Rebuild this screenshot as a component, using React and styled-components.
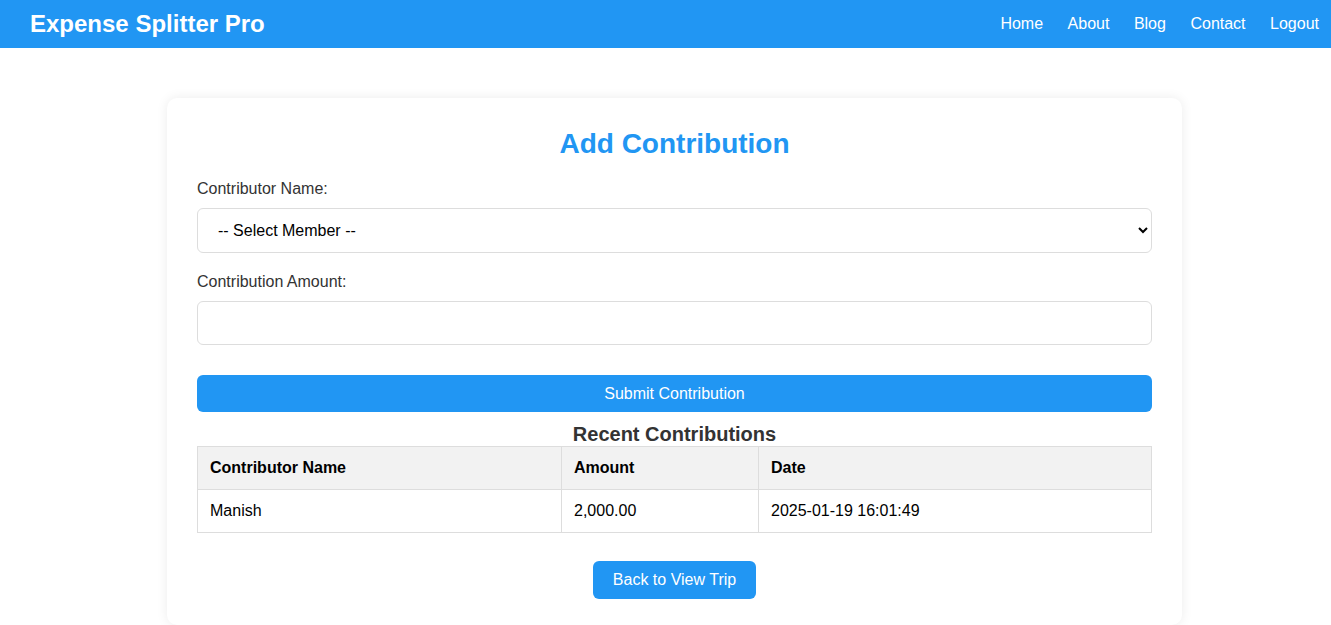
import React from "react";
import styled, { createGlobalStyle } from "styled-components";

const GlobalStyle = createGlobalStyle`
  * { box-sizing: border-box; }
  body {
    margin: 0;
    font-family: "Liberation Sans", Arial, sans-serif;
    background: #ffffff;
    color: #333;
  }
`;

const contributions = [
  { name: "Manish", amount: "2,000.00", date: "2025-01-19 16:01:49" },
];

const App = () => {
  return (
    <>
      <GlobalStyle />
      <NavBar>
        <Brand>Expense Splitter Pro</Brand>
        <NavLinks>
          <NavLink href="#">Home</NavLink>
          <NavLink href="#">About</NavLink>
          <NavLink href="#">Blog</NavLink>
          <NavLink href="#">Contact</NavLink>
          <NavLink href="#">Logout</NavLink>
        </NavLinks>
      </NavBar>

      <Page>
        <Card>
          <Title>Add Contribution</Title>
          <Label>Contributor Name:</Label>
          <Select defaultValue="">
            <option value="">-- Select Member --</option>
            <option value="manish">Manish</option>
          </Select>
          <Label>Contribution Amount:</Label>
          <Input type="number" />
          <SubmitButton>Submit Contribution</SubmitButton>

          <SubHeading>Recent Contributions</SubHeading>
          <Table>
            <thead>
              <tr>
                <Th $width={364}>Contributor Name</Th>
                <Th $width={197}>Amount</Th>
                <Th>Date</Th>
              </tr>
            </thead>
            <tbody>
              {contributions.map((c) => (
                <tr key={c.date}>
                  <Td>{c.name}</Td>
                  <Td>{c.amount}</Td>
                  <Td>{c.date}</Td>
                </tr>
              ))}
            </tbody>
          </Table>

          <Center>
            <BackButton href="#">Back to View Trip</BackButton>
          </Center>
        </Card>
      </Page>
    </>
  );
};

export default App;

const NavBar = styled.nav`
  height: 48px;
  background: #2196f3;
  display: flex;
  align-items: center;
  justify-content: space-between;
  padding: 0 12px 0 30px;
`;

const Brand = styled.div`
  color: #fff;
  font-size: 24px;
  font-weight: 700;
`;

const NavLinks = styled.div`
  display: flex;
  gap: 24.5px;
`;

const NavLink = styled.a`
  color: #fff;
  text-decoration: none;
  font-size: 16px;
`;

const Page = styled.div`
  padding: 50px 0 0 18px;
`;

const Card = styled.div`
  width: 1015px;
  margin: 0 auto;
  background: #fff;
  border-radius: 10px;
  box-shadow: 0 0 12px rgba(0, 0, 0, 0.08);
  padding: 30px 30px 26px;
`;

const Title = styled.h2`
  margin: 0 0 19px;
  text-align: center;
  color: #2196f3;
  font-size: 28px;
  line-height: 32px;
  font-weight: 700;
`;

const Label = styled.label`
  display: block;
  font-size: 16px;
  line-height: 18px;
  padding-top: 1px;
  color: #333;
  margin-bottom: 10px;
`;

const fieldStyles = `
  display: block;
  width: 100%;
  border: 1px solid #ddd;
  border-radius: 6px;
  background: #fff;
  font-family: "Liberation Sans", Arial, sans-serif;
  font-size: 16px;
  color: #000;
  padding: 0 16px;
`;

const Select = styled.select`
  ${fieldStyles}
  height: 45px;
  margin-bottom: 19px;
`;

const Input = styled.input`
  ${fieldStyles}
  height: 44px;
  margin-bottom: 30px;
  outline: none;
`;

const SubmitButton = styled.button`
  display: block;
  width: 100%;
  height: 37px;
  border: none;
  border-radius: 6px;
  background: #2196f3;
  color: #fff;
  font-family: "Liberation Sans", Arial, sans-serif;
  font-size: 16px;
  cursor: pointer;
`;

const SubHeading = styled.h3`
  margin: 10px 0 0;
  text-align: center;
  font-size: 20px;
  line-height: 24px;
  font-weight: 700;
  color: #333;
`;

const Table = styled.table`
  width: 100%;
  border-collapse: collapse;
  font-size: 16px;
`;

const Th = styled.th`
  width: ${(p) => (p.$width ? `${p.$width}px` : "auto")};
  background: #f2f2f2;
  border: 1px solid #ddd;
  text-align: left;
  font-weight: 700;
  color: #000;
  padding: 12px;
  height: 43px;
`;

const Td = styled.td`
  border: 1px solid #ddd;
  color: #000;
  padding: 12px;
  height: 43px;
`;

const Center = styled.div`
  display: flex;
  justify-content: center;
  margin-top: 28px;
`;

const BackButton = styled.a`
  display: inline-flex;
  align-items: center;
  height: 38px;
  padding: 0 20px;
  background: #2196f3;
  color: #fff;
  border-radius: 6px;
  text-decoration: none;
  font-size: 16px;
`;
